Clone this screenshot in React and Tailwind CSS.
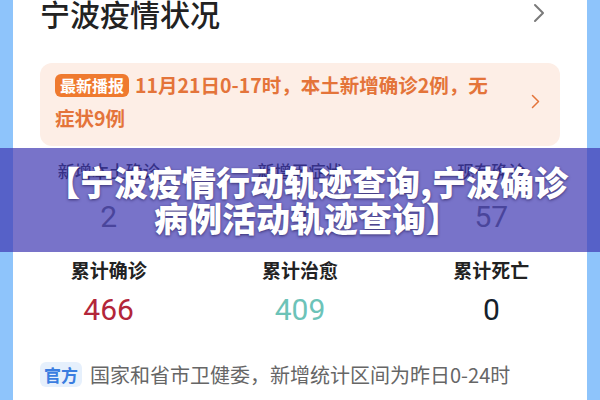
const cjk = "font-['Noto_Sans_CJK_SC','Noto_Sans',sans-serif]";

function Chevron({ className }) {
  return (
    <svg viewBox="0 0 12 20" className={className} fill="none" stroke="currentColor" strokeWidth="2" strokeLinecap="round" strokeLinejoin="round">
      <path d="M2 2l8 8-8 8" />
    </svg>
  );
}

const today = [
  { label: '新增本土确诊', value: '2' },
  { label: '新增无症状', value: '9' },
  { label: '现有确诊', value: '57' },
];

const totals = [
  { label: '累计确诊', value: '466', color: 'text-[#b3263a]' },
  { label: '累计治愈', value: '409', color: 'text-[#6cc3b8]' },
  { label: '累计死亡', value: '0', color: 'text-[#14202b]' },
];

export default function App() {
  return (
    <div className={`relative h-[400px] w-[600px] overflow-hidden bg-[#8ec4fb] px-[13px] ${cjk}`}>
      <div className="h-full bg-white">
        <div className="flex h-[26px] items-center justify-between pl-[27px] pr-[42px]">
          <h2 className="text-[30px] leading-none font-medium text-[#222]">宁波疫情状况</h2>
          <Chevron className="h-[20px] w-[12px] text-[#7a7a7a]" />
        </div>

        <div className="mx-[27px] mt-[37px] flex items-center rounded-xl bg-[#fdeee6] pt-[5px] pb-[12px] pl-[15px] pr-[20px]">
          <p className="w-[445px] text-[19.5px] leading-[33px] font-bold text-[#e4743a]">
            <span className="mr-[6px] inline-block rounded-md bg-[#ef7a2f] px-[5px] align-[1px] text-[16px] leading-[23px] font-bold text-white">
              最新播报
            </span>
            11月21日0-17时，本土新增确诊2例，无症状9例
          </p>
          <Chevron className="ml-auto h-[15px] w-[9px] text-[#e4743a]" />
        </div>

        <div className="mt-[14px] grid grid-cols-3 text-center">
          {today.map((item) => (
            <div key={item.label}>
              <div className="text-[17px] leading-[22px] font-medium text-[#222]">{item.label}</div>
              <div className="mt-[17px] font-['Roboto',sans-serif] text-[30px] leading-[36px] text-[#666]">{item.value}</div>
            </div>
          ))}
        </div>

        <div className="mt-[24px] grid grid-cols-3 text-center">
          {totals.map((item) => (
            <div key={item.label}>
              <div className="text-[19px] leading-[22px] font-bold text-[#222]">{item.label}</div>
              <div className={`mt-[11px] font-['Roboto',sans-serif] text-[30px] leading-[36px] ${item.color}`}>{item.value}</div>
            </div>
          ))}
        </div>

        <div className="mt-[34px] flex items-center gap-[8px] pl-[27px]">
          <span className="rounded-md bg-[#e6f0fc] px-[4px] text-[17px] leading-[25px] font-bold text-[#3a7de0]">官方</span>
          <span className="text-[20px] leading-[24px] text-[#666]">国家和省市卫健委，新增统计区间为昨日0-24时</span>
        </div>
      </div>

      <div className="absolute inset-x-0 top-[148px] flex h-[104px] flex-col items-center justify-center bg-[rgba(62,56,178,0.7)] pl-[14px] text-[34px] leading-[36px] font-black text-white [text-shadow:0_1px_3px_rgba(30,20,80,0.7)]">
        <div>【宁波疫情行动轨迹查询,宁波确诊</div>
        <div>病例活动轨迹查询】</div>
      </div>
    </div>
  );
}
